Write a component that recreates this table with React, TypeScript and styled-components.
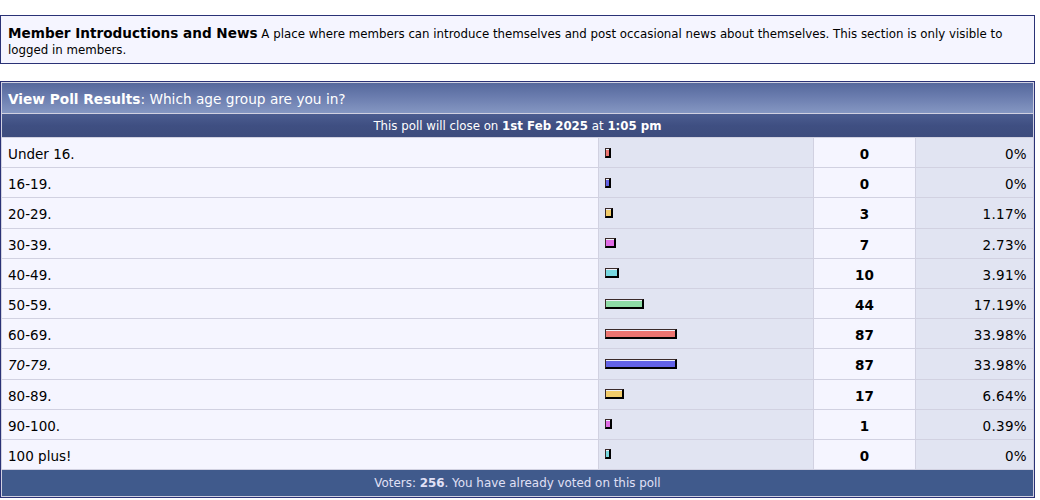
import React from "react";
import styled, { createGlobalStyle } from "styled-components";

const GlobalStyle = createGlobalStyle`
  html, body {
    margin: 0;
    padding: 0;
    background: #ffffff;
  }
  body {
    font-family: "DejaVu Sans", Verdana, "Liberation Sans", sans-serif;
    color: #000000;
  }
`;

const COLS = "596px 214px 101px 117px";

const Page = styled.div`
  width: 1035px;
  padding-top: 15px;
`;

const ForumInfo = styled.div`
  border: 1px solid #2a3276;
  background: #f5f5ff;
  padding: 9px 6px 5px 7px;
  font-size: 11.8px;
  line-height: 16px;
`;

const ForumTitle = styled.strong`
  font-weight: bold;
  font-size: 13.6px;
  line-height: 16px;
`;

const ForumDesc = styled.span`
  font-size: 11.8px;
`;

const PollTable = styled.div`
  margin-top: 17px;
  border: 1px solid #2a3276;
  background: #d1d1e1;
  padding: 1px;
  display: grid;
  grid-template-columns: ${COLS};
  gap: 1px;
`;

const CatBar = styled.div`
  grid-column: 1 / -1;
  height: 30px;
  display: flex;
  align-items: center;
  padding: 1px 6px 0;
  box-sizing: border-box;
  background: linear-gradient(#55689c 0%, #6a7cae 45%, #8597c2 100%);
  color: #ffffff;
  font-size: 13.7px;
  white-space: pre;
`;

const HeadBar = styled.div`
  grid-column: 1 / -1;
  height: 23px;
  display: flex;
  align-items: center;
  justify-content: center;
  background: linear-gradient(#4c5d90 0%, #3f4f82 50%, #3d4c7d 100%);
  color: #ffffff;
  font-size: 11.8px;
  white-space: pre;
`;

const FootBar = styled.div`
  grid-column: 1 / -1;
  height: 26px;
  display: flex;
  align-items: center;
  justify-content: center;
  background: #405a8c;
  color: #e0e0f6;
  font-size: 11.9px;
  white-space: pre;
`;

const Row = styled.div`
  grid-column: 1 / -1;
  display: grid;
  grid-template-columns: ${COLS};
  gap: 1px;
  height: 29.2px;
`;

const Cell = styled.div<{ $alt?: boolean; $align?: "left" | "center" | "right" }>`
  background: ${(p) => (p.$alt ? "#e1e4f2" : "#f5f5ff")};
  display: flex;
  align-items: center;
  justify-content: ${(p) =>
    p.$align === "center" ? "center" : p.$align === "right" ? "flex-end" : "flex-start"};
  padding: 3px 6px 0;
  box-sizing: border-box;
  font-size: 13.5px;
  white-space: nowrap;
`;

const Option = styled.span<{ $mine?: boolean }>`
  font-style: ${(p) => (p.$mine ? "italic" : "normal")};
`;

const Votes = styled.span`
  font-weight: bold;
`;

const Percent = styled.span`
  letter-spacing: 0.3px;
`;

const Bar = styled.span<{ $color: string }>`
  display: inline-block;
  box-sizing: border-box;
  height: 10px;
  margin-top: -3px;
  background: linear-gradient(
    rgba(255, 255, 255, 0.45) 0px,
    rgba(255, 255, 255, 0.45) 1px,
    ${(p) => p.$color} 1px,
    ${(p) => p.$color} 100%
  );
  border-top: 1px solid #3a2a2a;
  border-left: 1px solid #3a2a2a;
  border-right: 2px solid #000000;
  border-bottom: 2px solid #000000;
`;

const COLORS = ["#ec7470", "#6262e6", "#f2cc6a", "#e06ce6", "#78d8e0", "#8edca6"];

const options: { label: string; votes: number; pct: string; mine?: boolean }[] = [
  { label: "Under 16.", votes: 0, pct: "0%" },
  { label: "16-19.", votes: 0, pct: "0%" },
  { label: "20-29.", votes: 3, pct: "1.17%" },
  { label: "30-39.", votes: 7, pct: "2.73%" },
  { label: "40-49.", votes: 10, pct: "3.91%" },
  { label: "50-59.", votes: 44, pct: "17.19%" },
  { label: "60-69.", votes: 87, pct: "33.98%" },
  { label: "70-79.", votes: 87, pct: "33.98%", mine: true },
  { label: "80-89.", votes: 17, pct: "6.64%" },
  { label: "90-100.", votes: 1, pct: "0.39%" },
  { label: "100 plus!", votes: 0, pct: "0%" },
];

export default function App() {
  return (
    <Page>
      <GlobalStyle />
      <ForumInfo>
        <ForumTitle>Member Introductions and News</ForumTitle>{" "}
        <ForumDesc>
          A place where members can introduce themselves and post occasional news about
          themselves. This section is only visible to logged in members.
        </ForumDesc>
      </ForumInfo>
      <PollTable>
        <CatBar>
          <strong>View Poll Results</strong>: Which age group are you in?
        </CatBar>
        <HeadBar>
          This poll will close on <strong>1st Feb 2025</strong> at <strong>1:05 pm</strong>
        </HeadBar>
        {options.map((o, i) => {
          const pct = parseFloat(o.pct);
          const width = 6 + Math.round(pct * 1.94);
          return (
            <Row key={o.label}>
              <Cell>
                <Option $mine={o.mine}>{o.label}</Option>
              </Cell>
              <Cell $alt>
                <Bar $color={COLORS[i % COLORS.length]} style={{ width }} />
              </Cell>
              <Cell $align="center">
                <Votes>{o.votes}</Votes>
              </Cell>
              <Cell $alt $align="right">
                <Percent>{o.pct}</Percent>
              </Cell>
            </Row>
          );
        })}
        <FootBar>
          Voters: <strong>256</strong>. You have already voted on this poll
        </FootBar>
      </PollTable>
    </Page>
  );
}
